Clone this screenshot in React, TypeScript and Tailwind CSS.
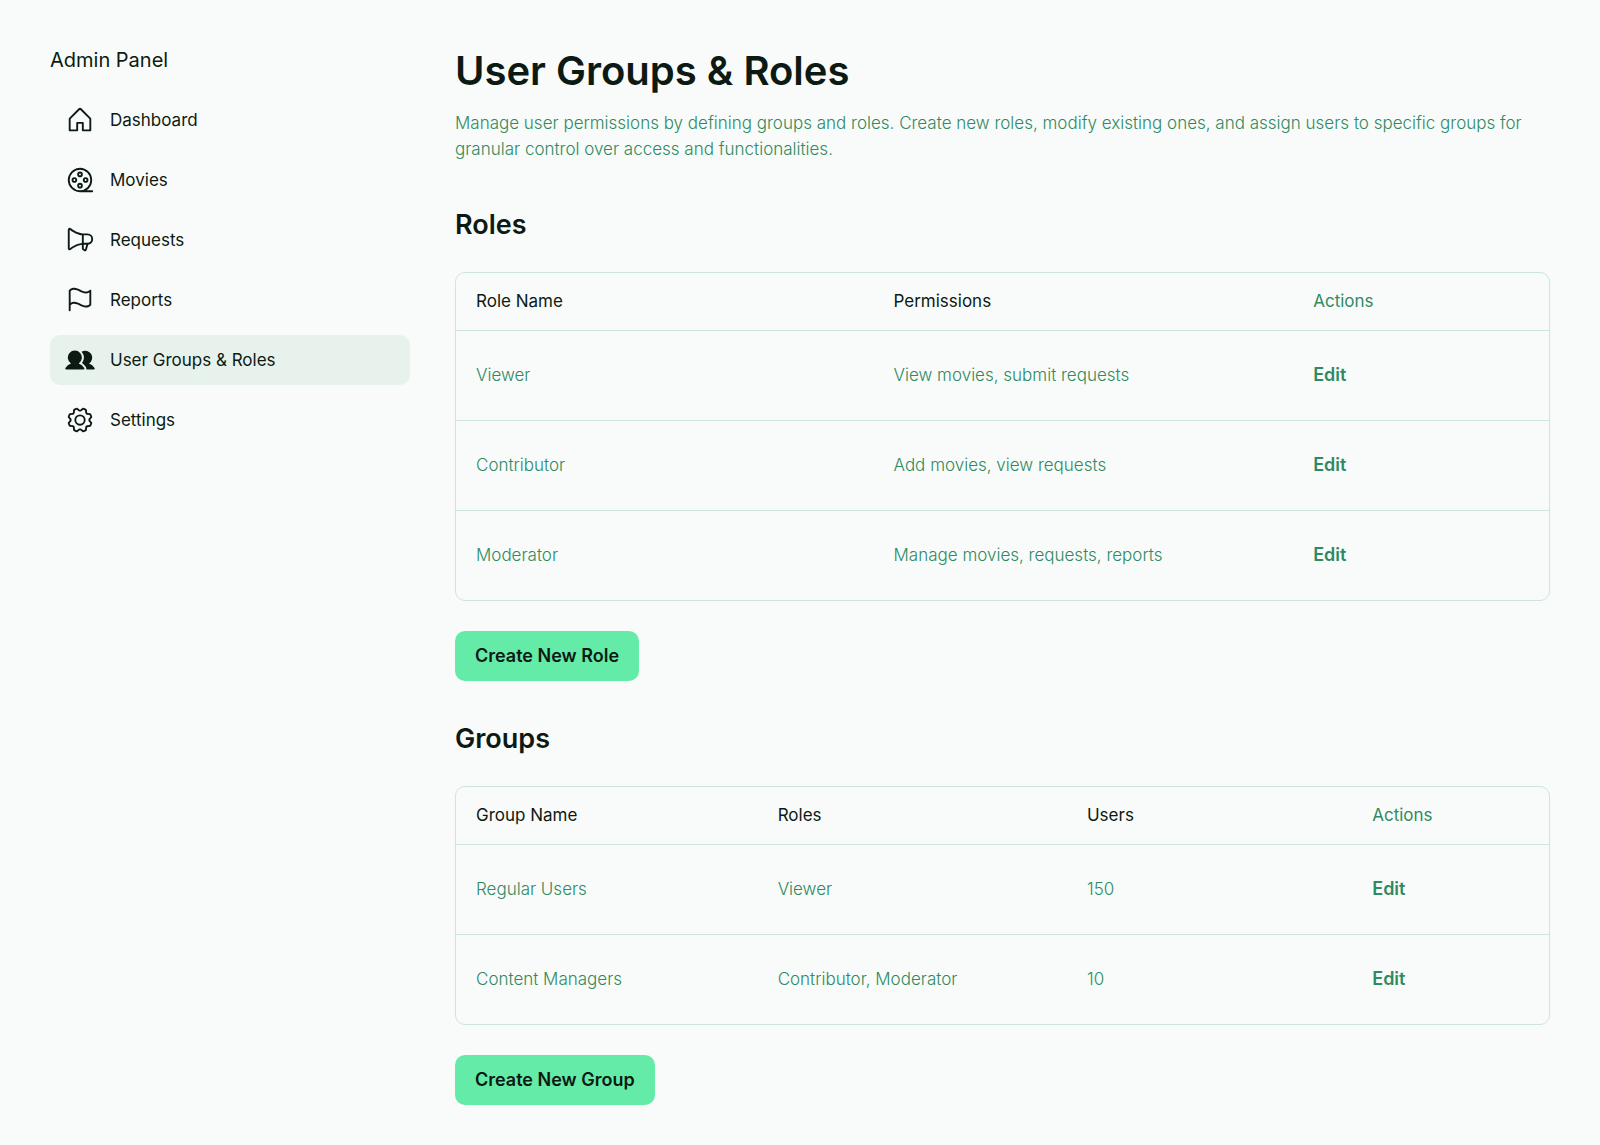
import type { ComponentType, ReactNode } from "react";
import { PiFilmReel, PiGear, PiHouse, PiUsersFill } from "react-icons/pi";

type IconProps = { className?: string };

function MegaphoneIcon({ className }: IconProps) {
  return (
    <svg viewBox="0 0 256 256" fill="currentColor" aria-hidden="true" className={className}>
      <path d="M240,120a48.05,48.05,0,0,0-48-48H152.2c-2.91-.17-53.62-3.74-101.91-44.24A16,16,0,0,0,24,40V200a16,16,0,0,0,26.29,12.25c37.77-31.68,77-40.76,93.71-43.3v31.72A16,16,0,0,0,151.12,214l11,7.33A16,16,0,0,0,186.5,212l11.77-44.36A48.07,48.07,0,0,0,240,120ZM40,199.93V40h0c42.81,35.91,86.63,45,104,47.24v65.48C126.65,155,82.84,164.07,40,199.93Zm131,8,0,.11-11-7.33V168h21.6ZM192,152H160V88h32a32,32,0,1,1,0,64Z" />
    </svg>
  );
}

function FlagIcon({ className }: IconProps) {
  return (
    <svg viewBox="0 0 256 256" fill="currentColor" aria-hidden="true" className={className}>
      <path d="M34.76,42A8,8,0,0,0,32,48V216a8,8,0,0,0,16,0V171.77c26.79-21.16,49.87-9.75,76.45,3.41,16.4,8.11,34.06,16.85,53,16.85,13.93,0,28.54-4.75,43.82-18a8,8,0,0,0,2.76-6V48A8,8,0,0,0,210.76,42c-28,24.23-51.72,12.49-79.21-1.12C103.07,26.76,70.78,10.79,34.76,42ZM208,164.25c-26.79,21.16-49.87,9.74-76.45-3.41-25-12.35-52.81-26.13-83.55-8.4V51.79c26.79-21.16,49.87-9.75,76.45,3.4,25,12.35,52.82,26.13,83.55,8.4Z" />
    </svg>
  );
}

const navItems: { label: string; icon: ComponentType<IconProps>; active?: boolean }[] = [
  { label: "Dashboard", icon: PiHouse },
  { label: "Movies", icon: PiFilmReel },
  { label: "Requests", icon: MegaphoneIcon },
  { label: "Reports", icon: FlagIcon },
  { label: "User Groups & Roles", icon: PiUsersFill, active: true },
  { label: "Settings", icon: PiGear },
];

type Column = { label: string; width: string };

const roleColumns: Column[] = [
  { label: "Role Name", width: "w-[38.2%]" },
  { label: "Permissions", width: "w-[38.4%]" },
  { label: "Actions", width: "w-[23.4%]" },
];
const roleRows = [
  ["Viewer", "View movies, submit requests"],
  ["Contributor", "Add movies, view requests"],
  ["Moderator", "Manage movies, requests, reports"],
];

const groupColumns: Column[] = [
  { label: "Group Name", width: "w-[27.6%]" },
  { label: "Roles", width: "w-[28.3%]" },
  { label: "Users", width: "w-[26.1%]" },
  { label: "Actions", width: "w-[18%]" },
];
const groupRows = [
  ["Regular Users", "Viewer", "150"],
  ["Content Managers", "Contributor, Moderator", "10"],
];

function DataTable({ label, columns, rows }: { label: string; columns: Column[]; rows: string[][] }) {
  return (
    <div className="overflow-hidden rounded-[10px] border border-[#cde5da]">
      <table aria-label={label} className="w-full table-fixed border-collapse text-left">
        <thead>
          <tr>
            {columns.map((c, i) => (
              <th
                key={c.label}
                scope="col"
                className={`${c.width} h-[57px] px-5 font-normal ${i === columns.length - 1 ? "text-[#2f8a61]" : ""}`}
              >
                {c.label}
              </th>
            ))}
          </tr>
        </thead>
        <tbody className="text-[#2f8a61]">
          {rows.map((row) => (
            <tr key={row[0]} className="border-t border-[#cde5da]">
              {row.map((cell) => (
                <td key={cell} className="h-[90px] px-5 font-light">
                  {cell}
                </td>
              ))}
              <td className="h-[90px] px-5">
                <button type="button" aria-label={`Edit ${row[0]}`} className="cursor-pointer text-[18px] font-semibold">
                  Edit
                </button>
              </td>
            </tr>
          ))}
        </tbody>
      </table>
    </div>
  );
}

function Section({ title, action, children }: { title: string; action: string; children: ReactNode }) {
  return (
    <section>
      <h2 className="pt-[25px] pb-[30px] text-[27px] leading-[35px] font-semibold">{title}</h2>
      {children}
      <button
        type="button"
        className="mt-[30px] mb-[15px] flex h-[50px] cursor-pointer items-center rounded-[10px] bg-[#64eba8] px-5 text-[18px] font-semibold"
      >
        {action}
      </button>
    </section>
  );
}

export default function App() {
  return (
    <div className="flex min-h-screen gap-[45px] bg-[#f9fbfa] px-[50px] pt-[45px] pb-[25px] font-['Inter',sans-serif] text-[17px] leading-[26px] text-[#0c1a13]">
      <aside className="w-[360px] shrink-0">
        <div className="mb-5 text-[20px] leading-[30px]">Admin Panel</div>
        <nav aria-label="Main" className="flex flex-col gap-2.5">
          {navItems.map(({ label, icon: Icon, active }) => (
            <a
              key={label}
              href="#"
              aria-current={active ? "page" : undefined}
              className={`flex h-[50px] items-center gap-[15px] rounded-[10px] px-[15px] ${active ? "bg-[#e8f2ec]" : ""}`}
            >
              <Icon className="size-[30px] shrink-0" />
              <span>{label}</span>
            </a>
          ))}
        </nav>
      </aside>
      <main className="min-w-0 flex-1">
        <h1 className="text-[40px] leading-[52px] font-semibold">User Groups &amp; Roles</h1>
        <p className="mt-[13px] mb-5 font-light text-[#2f8a61]">
          Manage user permissions by defining groups and roles. Create new roles, modify existing ones, and assign
          users to specific groups for granular control over access and functionalities.
        </p>
        <Section title="Roles" action="Create New Role">
          <DataTable label="Roles" columns={roleColumns} rows={roleRows} />
        </Section>
        <Section title="Groups" action="Create New Group">
          <DataTable label="Groups" columns={groupColumns} rows={groupRows} />
        </Section>
      </main>
    </div>
  );
}
